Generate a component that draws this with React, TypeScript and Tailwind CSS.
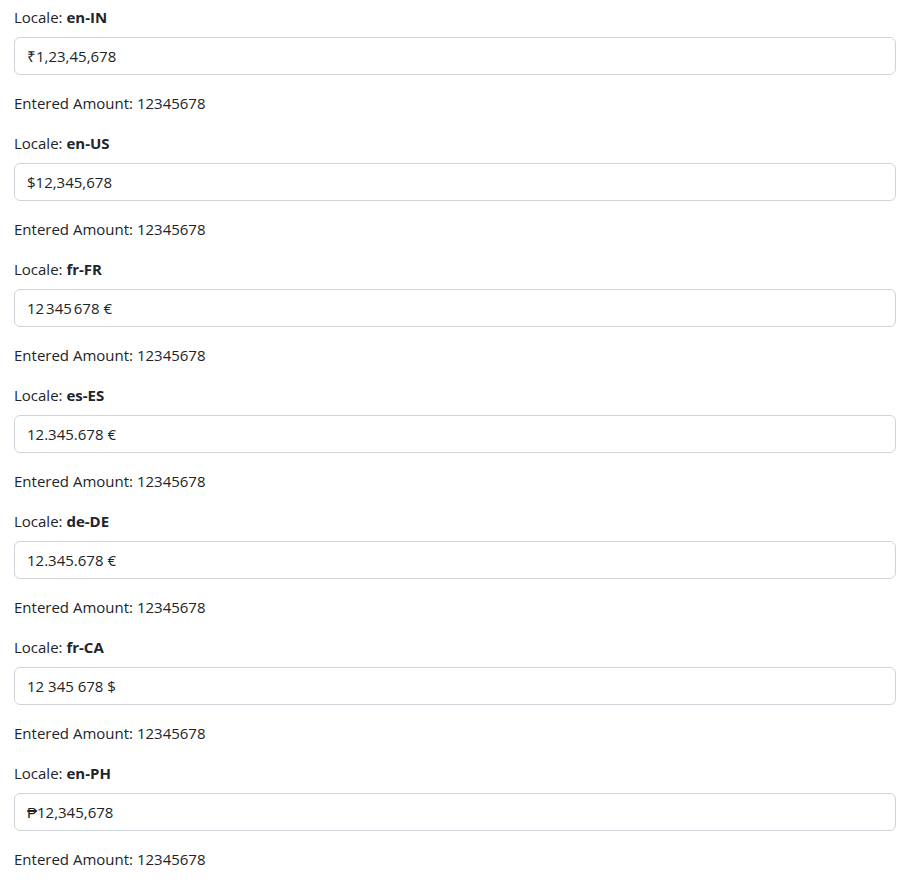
import React from 'react';

const rows = [
  { locale: 'en-IN', value: '₹1,23,45,678' },
  { locale: 'en-US', value: '$12,345,678' },
  { locale: 'fr-FR', value: '12\u202f345\u202f678\u00a0€' },
  { locale: 'es-ES', value: '12.345.678\u00a0€' },
  { locale: 'de-DE', value: '12.345.678\u00a0€' },
  { locale: 'fr-CA', value: '12\u00a0345\u00a0678\u00a0$' },
  { locale: 'en-PH', value: '₱12,345,678' },
];

export default function App() {
  return (
    <div className="pl-[14px] pr-[9px] pt-[5px] text-[#212529] text-[15px] leading-6 font-['Open_Sans',sans-serif]">
      {rows.map((row) => (
        <div key={row.locale} className="pb-4">
          <label className="block mb-2">
            Locale: <b className="font-bold">{row.locale}</b>
          </label>
          <input
            type="text"
            readOnly
            value={row.value}
            className="block w-full h-[38px] px-3 border border-[#ced4da] rounded-md bg-white text-[#212529] outline-none"
          />
          <p className="mt-4">Entered Amount: 12345678</p>
        </div>
      ))}
    </div>
  );
}
